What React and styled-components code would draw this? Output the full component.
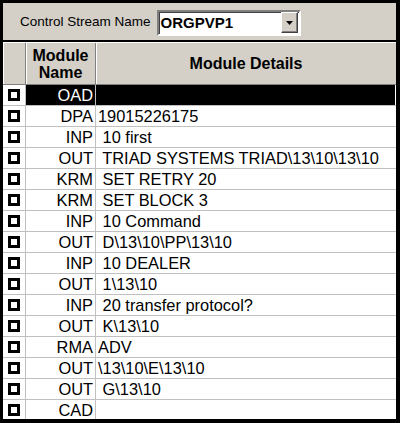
import styled, { createGlobalStyle } from "styled-components";

const rows = [
  ["OAD", ""],
  ["DPA", "19015226175"],
  ["INP", " 10 first"],
  ["OUT", " TRIAD SYSTEMS TRIAD\\13\\10\\13\\10"],
  ["KRM", " SET RETRY 20"],
  ["KRM", " SET BLOCK 3"],
  ["INP", " 10 Command"],
  ["OUT", " D\\13\\10\\PP\\13\\10"],
  ["INP", " 10 DEALER"],
  ["OUT", " 1\\13\\10"],
  ["INP", " 20 transfer protocol?"],
  ["OUT", " K\\13\\10"],
  ["RMA", "ADV"],
  ["OUT", "\\13\\10\\E\\13\\10"],
  ["OUT", " G\\13\\10"],
  ["CAD", ""],
];

function App() {
  return (
    <>
      <GlobalStyle />
      <Frame>
        <Toolbar>
          <Label>Control Stream Name</Label>
          <Combo>
            <ComboText>ORGPVP1</ComboText>
            <DropButton>
              <svg width="7" height="4" viewBox="0 0 7 4">
                <path d="M0 0h7L3.5 4z" fill="#000" />
              </svg>
            </DropButton>
          </Combo>
        </Toolbar>
        <Grid>
          <HeadRow>
            <HeadCell />
            <HeadCell>
              Module
              <br />
              Name
            </HeadCell>
            <HeadCell>Module Details</HeadCell>
          </HeadRow>
          {rows.map(([name, details], i) => (
            <Row key={i}>
              <CheckCell>
                <Check />
              </CheckCell>
              <NameCell $selected={i === 0}>{name}</NameCell>
              <DetailCell $selected={i === 0}>{details}</DetailCell>
            </Row>
          ))}
        </Grid>
      </Frame>
    </>
  );
}

const GlobalStyle = createGlobalStyle`
  body {
    margin: 0;
    background: #000;
    font-family: "Liberation Sans", Arial, sans-serif;
  }
`;

const Frame = styled.div`
  width: 400px;
  height: 423px;
  box-sizing: border-box;
  border: 3px solid #000;
  border-right-width: 4px;
  border-bottom-width: 4px;
  background: #d4d0c8;
  display: flex;
  flex-direction: column;
  overflow: hidden;
`;

const Toolbar = styled.div`
  height: 37px;
  flex: none;
  display: flex;
  align-items: center;
  padding-left: 17px;
  gap: 6px;
`;

const Label = styled.span`
  font-size: 13.5px;
  color: #000;
`;

const Combo = styled.div`
  width: 144px;
  height: 26px;
  box-sizing: border-box;
  border: 2px solid;
  border-color: #808080 #fff #fff #808080;
  box-shadow: inset 1px 1px 0 #404040;
  background: #fff;
  display: flex;
  align-items: center;
  padding-right: 1px;
  margin-top: 2px;
`;

const ComboText = styled.span`
  flex: 1;
  font-size: 15px;
  font-weight: bold;
  padding-left: 2px;
`;

const DropButton = styled.div`
  width: 17px;
  height: 21px;
  box-sizing: border-box;
  background: #d4d0c8;
  border: 1px solid;
  border-color: #fff #404040 #404040 #fff;
  box-shadow: inset -1px -1px 0 #808080;
  display: flex;
  align-items: center;
  justify-content: center;
`;

const Grid = styled.div`
  flex: 1;
  border-top: 2px solid #000;
  background: #fff;
  display: flex;
  flex-direction: column;
`;

const HeadRow = styled.div`
  display: grid;
  grid-template-columns: 23px 70px 1fr;
  height: 41px;
  flex: none;
  background: #d4d0c8;
  border-top: 1px solid #fff;
  border-bottom: 1px solid #808080;
`;

const HeadCell = styled.div`
  border-right: 1px solid #808080;
  box-shadow: inset 1px 0 0 #fff;
  display: flex;
  align-items: center;
  justify-content: center;
  text-align: center;
  font-weight: bold;
  font-size: 16px;
  line-height: 17px;
  color: #000;
  &:last-child {
    border-right: none;
  }
`;

const Row = styled.div`
  display: grid;
  grid-template-columns: 23px 70px 1fr;
  height: 21px;
  flex: none;
  box-sizing: border-box;
  border-bottom: 1px solid #c0c0c0;
`;

const CheckCell = styled.div`
  border-right: 1px solid #c0c0c0;
  display: flex;
  align-items: center;
  justify-content: center;
  background: #fff;
`;

const Check = styled.div`
  width: 12px;
  height: 12px;
  box-sizing: border-box;
  border: 3px solid #000;
`;

const NameCell = styled.div`
  border-right: 1px solid #c0c0c0;
  background: ${(p) => (p.$selected ? "#000" : "#fff")};
  color: ${(p) => (p.$selected ? "#fff" : "#000")};
  font-size: 16.4px;
  line-height: 20px;
  text-align: right;
  padding-right: 2px;
`;

const DetailCell = styled.div`
  background: ${(p) => (p.$selected ? "#000" : "#fff")};
  box-shadow: ${(p) => (p.$selected ? "inset -1px 0 0 #fff" : "none")};
  color: #000;
  font-size: 16.4px;
  line-height: 20px;
  white-space: pre;
  padding-left: 2px;
  overflow: hidden;
`;

export default App;
